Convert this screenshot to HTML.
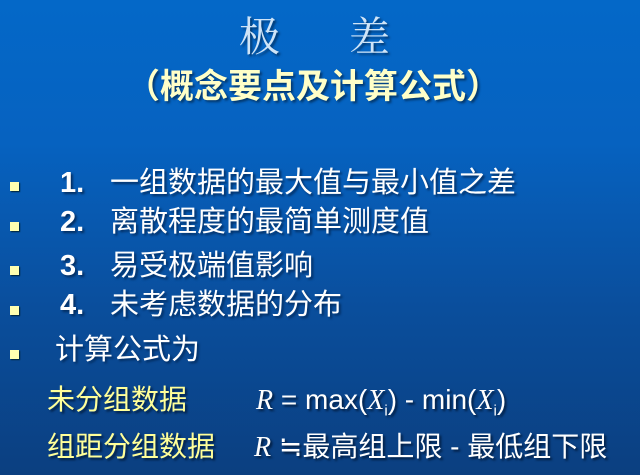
<!DOCTYPE html>
<html><head><meta charset="utf-8"><style>
body{margin:0;width:640px;height:475px;overflow:hidden;background:linear-gradient(180deg,#0468c8 0%,#0662c0 30%,#0a4e9c 65%,#0b3f80 100%);font-family:"Liberation Sans","Noto Sans CJK SC",sans-serif;position:relative}
.a{position:absolute;white-space:nowrap;line-height:1}
.t{color:#cfe4f7;font-family:"Liberation Serif","Noto Serif CJK SC",serif;font-size:41px;top:17px;text-shadow:2px 2px 2px #03386e}
.sub{color:#ffffc8;font-size:34px;font-weight:bold;top:67px;left:126px;text-shadow:2px 2px 2px #03386e;font-family:"Noto Sans CJK SC",sans-serif}
.b{width:9px;height:9px;background:#ffffb0;box-shadow:1px 1px 1px #023;left:10px}
.r{color:#fff;font-size:29px;left:60px;text-shadow:2px 2px 2px #032e62}
.r b{display:inline-block;width:50px}
.y{color:#ffff99;font-size:28px;text-shadow:2px 2px 2px #021d40}
.w{color:#fff;font-size:28px;text-shadow:2px 2px 2px #021d40}
i{font-family:"Liberation Serif",serif}
sub{font-size:15px}
</style></head><body>
<div class="a t" style="left:239px">极</div>
<div class="a t" style="left:349px">差</div>
<div class="a sub">（概念要点及计算公式）</div>
<div class="a b" style="top:182px"></div><div class="a r" style="top:169px"><b>1.</b>一组数据的最大值与最小值之差</div>
<div class="a b" style="top:222px"></div><div class="a r" style="top:208px"><b>2.</b>离散程度的最简单测度值</div>
<div class="a b" style="top:266px"></div><div class="a r" style="top:252px"><b>3.</b>易受极端值影响</div>
<div class="a b" style="top:306px"></div><div class="a r" style="top:291px"><b>4.</b>未考虑数据的分布</div>
<div class="a b" style="top:350px"></div><div class="a r" style="top:336px;left:55px">计算公式为</div>
<div class="a y" style="left:47px;top:386px">未分组数据</div>
<div class="a w" style="left:256px;top:386px"><i>R</i> = max(<i>X</i><sub>i</sub>) - min(<i>X</i><sub>i</sub>)</div>
<div class="a y" style="left:47px;top:433px">组距分组数据</div>
<div class="a w" style="left:254px;top:433px"><i>R</i> ≒最高组上限 - 最低组下限</div>
</body></html>
